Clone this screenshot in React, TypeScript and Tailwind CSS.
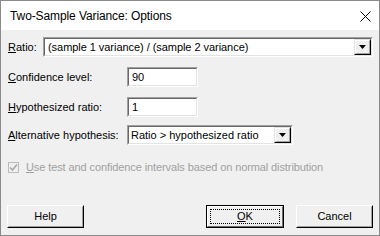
import React from "react";

function Sunken({ className = "", children }: { className?: string; children?: React.ReactNode }) {
  return (
    <div className={`border border-t-[#a0a0a0] border-l-[#a0a0a0] border-b-white border-r-white ${className}`}>
      <div className="h-full w-full border border-t-[#696969] border-l-[#696969] border-b-[#e3e3e3] border-r-[#e3e3e3] bg-white flex items-center">
        {children}
      </div>
    </div>
  );
}

function Arrow() {
  return (
    <div className="h-full w-[17px] border border-t-[#e3e3e3] border-l-[#e3e3e3] border-b-[#000] border-r-[#000]">
      <div className="h-full w-full border border-t-white border-l-white border-b-[#a0a0a0] border-r-[#a0a0a0] bg-[#f0f0f0] flex items-center justify-center">
        <svg width="7" height="4" viewBox="0 0 7 4">
          <path d="M0 0H7L3.5 4Z" fill="#000" />
        </svg>
      </div>
    </div>
  );
}

function Button({ children, isDefault = false }: { children: React.ReactNode; isDefault?: boolean }) {
  if (isDefault) {
    return (
      <div className="w-[78px] h-[23px] border border-black">
        <div className="h-full w-full border border-t-white border-l-white border-b-[#696969] border-r-[#696969] bg-[#f0f0f0] p-[2px]">
          <div className="h-full w-full border border-dotted border-black flex items-center justify-center">
            {children}
          </div>
        </div>
      </div>
    );
  }
  return (
    <div className="w-[77px] h-[23px] border border-t-white border-l-white border-b-black border-r-black">
      <div className="h-full w-full border border-t-[#f0f0f0] border-l-[#f0f0f0] border-b-[#a0a0a0] border-r-[#a0a0a0] bg-[#f0f0f0] flex items-center justify-center">
        {children}
      </div>
    </div>
  );
}

export default function App() {
  return (
    <div className="w-[380px] h-[236px] border border-[#8a8a8a] bg-[#f0f0f0] flex flex-col font-['Liberation_Sans',Arial,sans-serif] text-[11px] text-black leading-none">
      <div className="h-[29px] bg-white flex items-center justify-between pl-[9px] pr-[8px]">
        <span className="text-[12px] tracking-[-0.1px] font-['Liberation_Sans',sans-serif]">Two-Sample Variance: Options</span>
        <svg width="11" height="11" viewBox="0 0 11 11" className="mt-[1px]">
          <path d="M0.5 0.5L10.5 10.5M10.5 0.5L0.5 10.5" stroke="#000" strokeWidth="1" />
        </svg>
      </div>
      <div className="flex-1 flex flex-col pl-[7px] pr-[6px]">
        <div className="mt-[7px] h-[20px] flex items-center">
          <span className="w-[35px]"><u>R</u>atio:</span>
          <Sunken className="flex-1 h-[20px]">
            <span className="pl-[3px] flex-1 tracking-[-0.05px]">(sample 1 variance) / (sample 2 variance)</span>
            <Arrow />
          </Sunken>
        </div>
        <div className="mt-[10px] h-[20px] flex items-center">
          <span className="w-[119px]"><u>C</u>onfidence level:</span>
          <Sunken className="w-[71px] h-[20px]">
            <span className="pl-[3px]">90</span>
          </Sunken>
        </div>
        <div className="mt-[10px] h-[20px] flex items-center">
          <span className="w-[119px]"><u>H</u>ypothesized ratio:</span>
          <Sunken className="w-[71px] h-[20px]">
            <span className="pl-[3px]">1</span>
          </Sunken>
        </div>
        <div className="mt-[8px] h-[20px] flex items-center">
          <span className="w-[119px]"><u>A</u>lternative hypothesis:</span>
          <Sunken className="w-[166px] h-[20px]">
            <span className="pl-[2px] flex-1">Ratio &gt; hypothesized ratio</span>
            <Arrow />
          </Sunken>
        </div>
        <div className="mt-[16px] h-[13px] flex items-center">
          <div className="w-[11px] h-[11px] border border-[#bcbcbc] bg-[#f0f0f0] flex items-center justify-center">
            <svg width="9" height="9" viewBox="0 0 9 9">
              <path d="M1 4.5L3.5 7L8 1.5" stroke="#a8a8a8" strokeWidth="1.6" fill="none" />
            </svg>
          </div>
          <span className="ml-[7px] text-[#a0a0a0] tracking-[-0.1px]"><u>U</u>se test and confidence intervals based on normal distribution</span>
        </div>
        <div className="mt-[31px] flex items-center -ml-[1px]">
          <Button>Help</Button>
          <div className="flex-1" />
          <Button isDefault>
            <span><u>O</u>K</span>
          </Button>
          <div className="w-[12px]" />
          <Button>Cancel</Button>
        </div>
      </div>
    </div>
  );
}
